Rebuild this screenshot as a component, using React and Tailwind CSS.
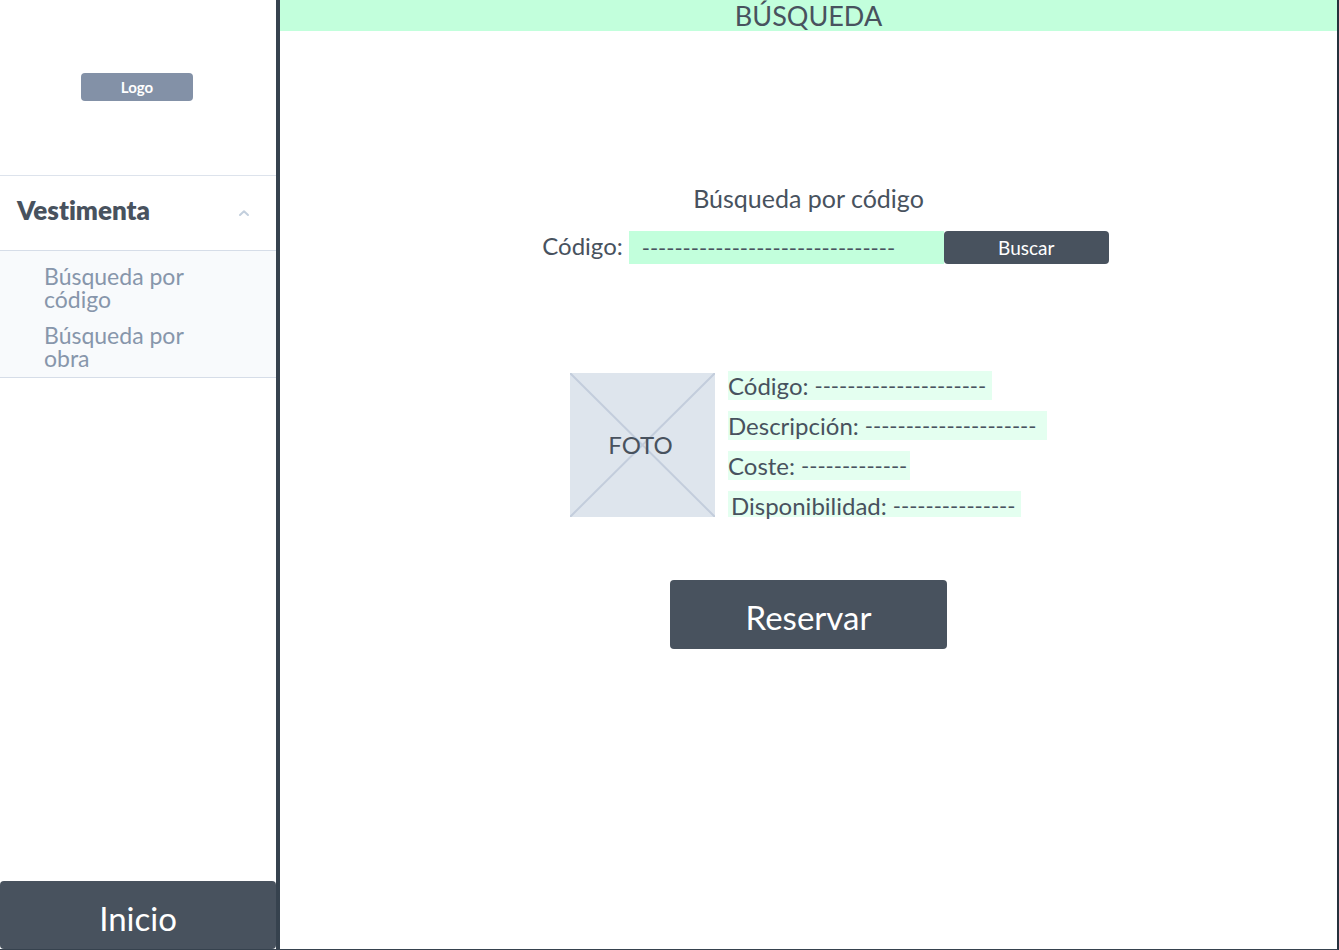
import { useState } from "react";

const details = [
  { label: "Código", value: "---------------------", box: "w-[264px] h-[29px]" },
  { label: "Descripción", value: "---------------------", box: "w-[319px] h-[29px]" },
  { label: "Coste", value: "-------------", box: "w-[182px] h-[29px]" },
  { label: "Disponibilidad", value: "---------------", box: "w-[293px] h-[26px] pl-[3px]" },
];

function Sidebar() {
  const [open, setOpen] = useState(true);
  return (
    <aside className="flex w-[280px] shrink-0 flex-col border-r-4 border-[#36424e]">
      <div className="flex h-[175px] items-center justify-center pr-0.5 pb-0.5">
        <div className="flex h-7 w-28 items-center justify-center rounded bg-[#8391a7] text-[15px] leading-[28px] font-bold text-white">
          Logo
        </div>
      </div>
      <nav>
        <button
          type="button"
          aria-expanded={open}
          onClick={() => setOpen(!open)}
          className="flex h-[75px] w-full items-center justify-between border-t border-[#dde3ec] pr-[26px] pl-[17px]"
        >
          <span className="pb-1.5 text-[26px] leading-8 font-extrabold">Vestimenta</span>
          <svg className={open ? "" : "rotate-180"} width="12" height="8" viewBox="0 0 12 8" fill="none" stroke="#c3cfdd" strokeWidth="2" strokeLinecap="round" strokeLinejoin="round" aria-hidden="true">
            <path d="M2 6 6 2.2 10 6" />
          </svg>
        </button>
        {open && (
          <ul className="flex flex-col gap-[13px] border-y border-[#d6dde8] bg-[#f8fafc] pt-[14px] pr-16 pb-[7px] pl-11 text-[23px] leading-[23px] text-[#8796ab]">
            <li><a href="#codigo" className="block">Búsqueda por código</a></li>
            <li><a href="#obra" className="block">Búsqueda por obra</a></li>
          </ul>
        )}
      </nav>
      <button type="button" className="mt-auto h-[68px] w-full rounded bg-[#48525e] pt-1.5 text-[33px] leading-[40px] text-white">
        Inicio
      </button>
    </aside>
  );
}

function PhotoPlaceholder() {
  return (
    <div className="grid h-36 w-[145px] place-items-center bg-[#dee5ed]">
      <svg className="col-start-1 row-start-1 h-full w-full" viewBox="0 0 145 144" preserveAspectRatio="none" stroke="#c3cddc" strokeWidth="2" aria-hidden="true">
        <path d="M0 0 145 144M145 0 0 144" />
      </svg>
      <span className="z-10 col-start-1 row-start-1 pr-1">FOTO</span>
    </div>
  );
}

export default function App() {
  return (
    <div className="flex min-h-screen border-r-2 border-b border-r-[#25313d] border-b-[#36424e] bg-white font-['Lato',sans-serif] text-[24px] leading-[30px] text-[#48525e] [font-variant-ligatures:none]">
      <Sidebar />
      <main className="flex min-w-0 flex-1 flex-col items-center">
        <h1 className="h-[31px] w-full bg-[#c2ffdc] text-center text-[27px] leading-8">BÚSQUEDA</h1>
        <h2 id="codigo" className="mt-[152px] text-[25px]">Búsqueda por código</h2>
        <form className="mt-[18px] flex h-[33px] items-center pl-[34px]" onSubmit={(e) => e.preventDefault()}>
          <label htmlFor="code" className="pr-1.5 pb-1">Código:</label>
          <input
            id="code"
            type="text"
            defaultValue="-------------------------------"
            className="h-full w-[315px] bg-[#c2ffdc] px-[13px] text-[22px] outline-none"
          />
          <button type="submit" className="h-full w-[165px] rounded bg-[#48525e] text-[19px] text-white">Buscar</button>
        </form>
        <section className="mt-[107px] flex items-start gap-[13px]">
          <div className="pt-0.5">
            <PhotoPlaceholder />
          </div>
          <dl className="flex flex-col gap-[11px]">
            {details.map((d) => (
              <div key={d.label} className={`flex gap-1.5 whitespace-nowrap bg-[#e4fff0] ${d.box}`}>
                <dt>{d.label}:</dt>
                <dd className="text-[22px]">{d.value}</dd>
              </div>
            ))}
          </dl>
        </section>
        <button type="button" className="mt-[63px] h-[69px] w-[277px] rounded bg-[#48525e] pt-1 text-[33px] leading-[40px] text-white">
          Reservar
        </button>
      </main>
    </div>
  );
}
